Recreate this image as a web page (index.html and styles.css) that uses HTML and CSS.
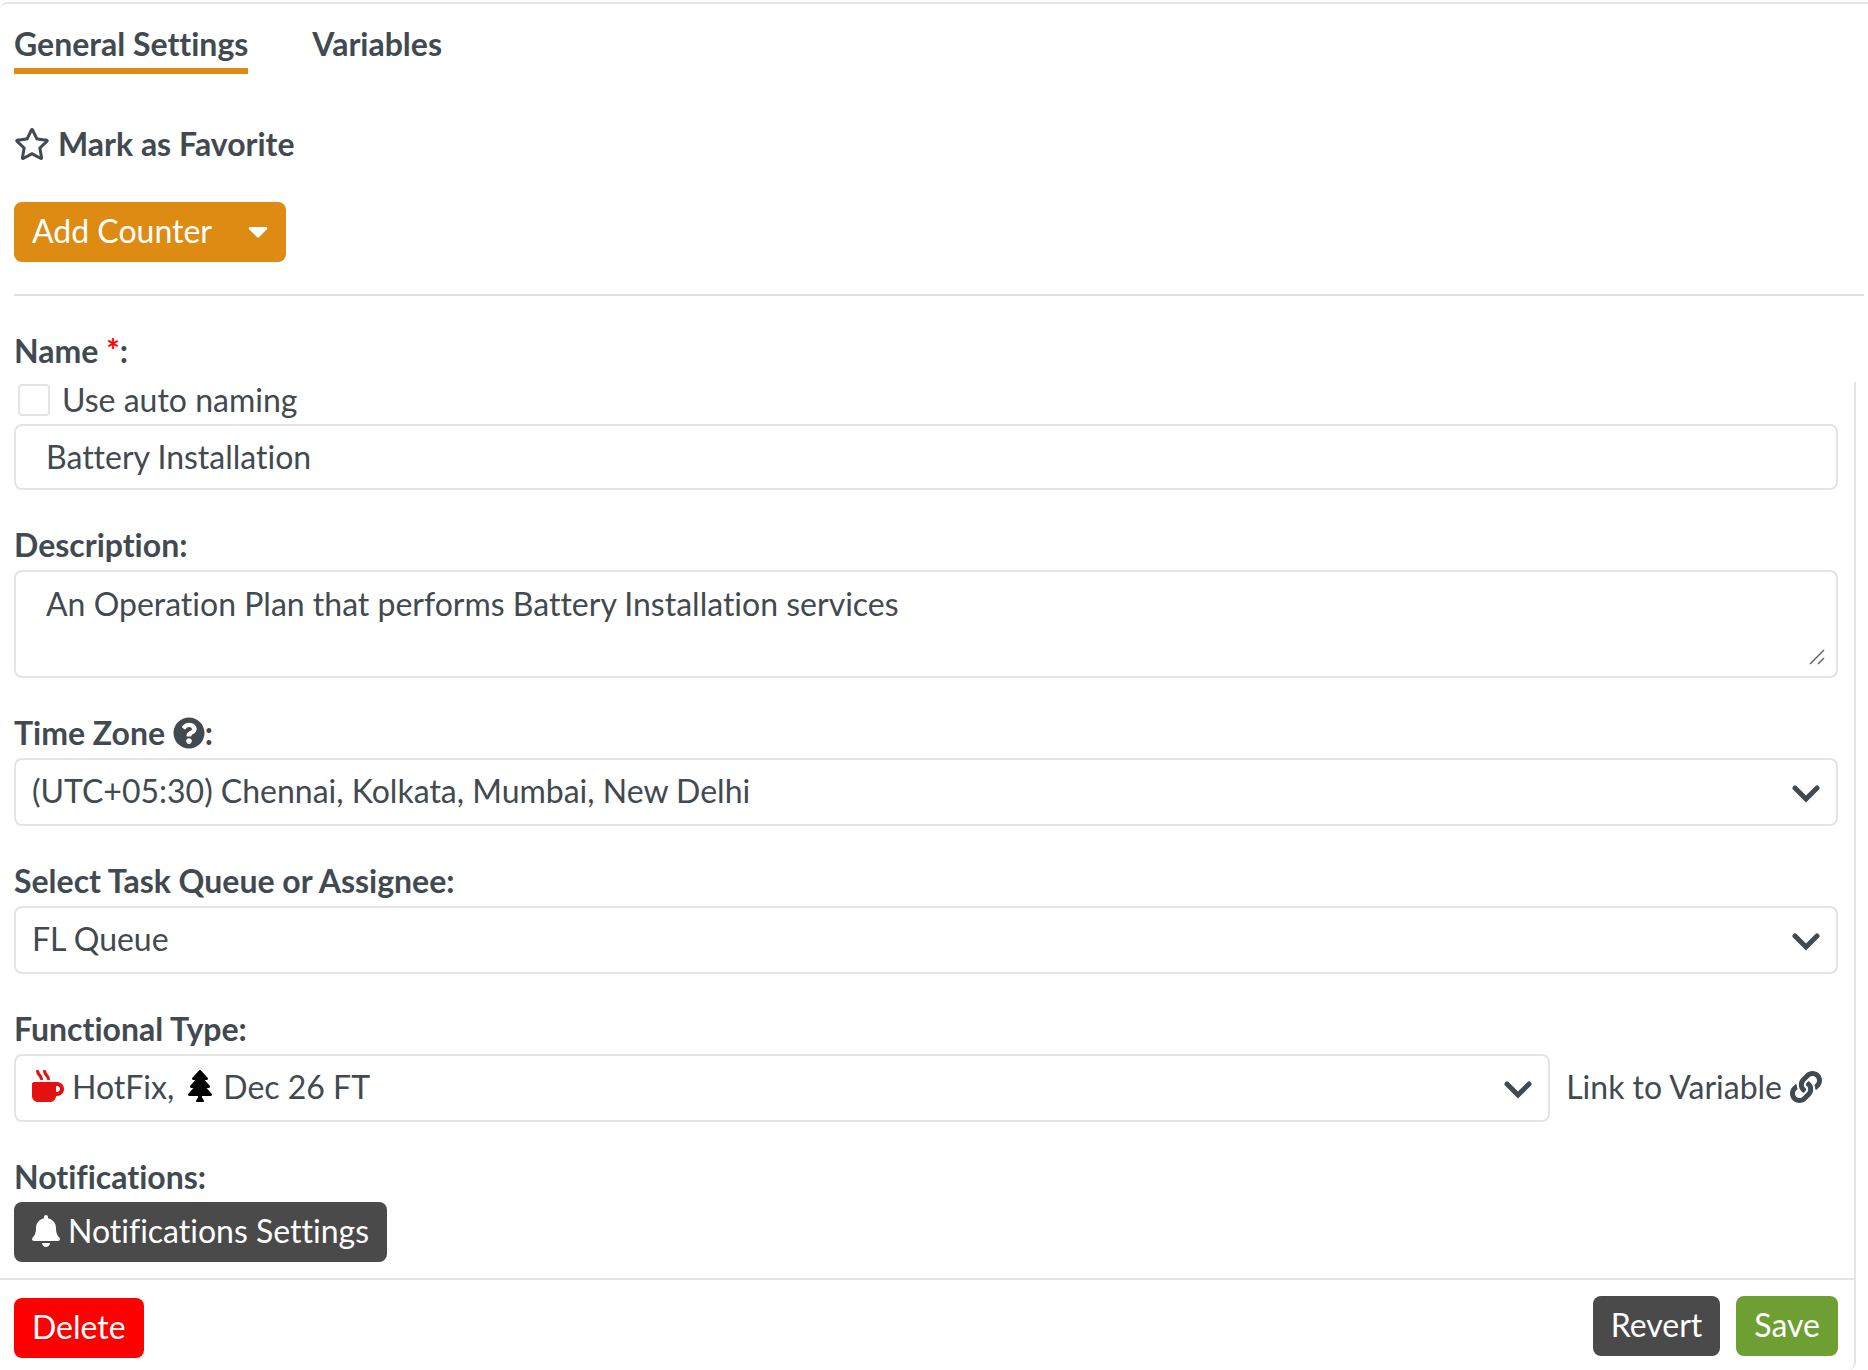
FILE: index.html
```html
<!DOCTYPE html>
<html lang="en">
<head>
<meta charset="utf-8">
<meta name="viewport" content="width=device-width, initial-scale=1">
<title>General Settings</title>
<link rel="stylesheet" href="styles.css">
</head>
<body>
<main class="panel">
  <header class="panel-head">
    <nav class="tabs">
      <a class="tab tab-active" href="#general">General Settings</a>
      <a class="tab" href="#variables">Variables</a>
    </nav>
    <button class="favorite" type="button">
      <svg class="icon-star" viewBox="0 0 576 512" aria-hidden="true"><path d="M528.1 171.5L382 150.2 316.7 17.8c-11.7-23.6-45.6-23.9-57.4 0L194 150.2 47.9 171.5c-26.2 3.8-36.7 36.1-17.7 54.6l105.7 103-25 145.5c-4.5 26.3 23.2 46 46.4 33.7L288 439.6l130.7 68.7c23.2 12.2 50.9-7.4 46.4-33.7l-25-145.5 105.7-103c19-18.5 8.5-50.8-17.7-54.6zM388.6 312.3l23.7 138.4L288 385.4l-124.3 65.3 23.7-138.4-100.6-98 139-20.2 62.2-126 62.2 126 139 20.2-100.6 98z"/></svg>
      Mark as Favorite
    </button>
    <button class="btn btn-orange" type="button">
      Add Counter
      <svg class="icon-caret" viewBox="0 0 320 512" aria-hidden="true"><path d="M31.3 192h257.3c17.8 0 26.7 21.5 14.1 34.1L174.1 354.8c-7.8 7.8-20.5 7.8-28.3 0L17.2 226.1C4.6 213.5 13.5 192 31.3 192z"/></svg>
    </button>
  </header>
  <label class="label label-name" for="name">Name <span class="required">*</span>:</label>
  <form class="form">
    <div class="fields">
      <div class="field">
        <label class="check"><input class="checkbox" type="checkbox">Use auto naming</label>
        <input class="control text" id="name" type="text" value="Battery Installation">
      </div>
      <div class="field">
        <label class="label" for="description">Description:</label>
        <div class="stack">
          <textarea class="control text area" id="description">An Operation Plan that performs Battery Installation services</textarea>
          <svg class="grip" viewBox="0 0 16 16" aria-hidden="true"><path d="M1 15L15 1M9 15l6-6"/></svg>
        </div>
      </div>
      <div class="field">
        <label class="label" for="zone">Time Zone <svg class="icon-help" viewBox="0 0 512 512" aria-hidden="true"><path d="M504 256c0 136.997-111.043 248-248 248S8 392.997 8 256C8 119.083 119.043 8 256 8s248 111.083 248 248zM262.655 90c-54.497 0-89.255 22.957-116.549 63.758-3.536 5.286-2.353 12.415 2.715 16.258l34.699 26.31c5.205 3.947 12.621 3.008 16.665-2.122 17.864-22.658 30.113-35.797 57.303-35.797 20.429 0 45.698 13.148 45.698 32.958 0 14.976-12.363 22.667-32.534 33.976C247.128 238.528 216 254.941 216 296v4c0 6.627 5.373 12 12 12h56c6.627 0 12-5.373 12-12v-1.333c0-28.462 83.186-29.647 83.186-106.667 0-58.002-60.165-102-116.531-102zM256 338c-25.365 0-46 20.635-46 46 0 25.364 20.635 46 46 46s46-20.636 46-46c0-25.364-20.635-46-46-46z"/></svg>:</label>
        <div class="stack">
          <select class="control select" id="zone"><option>(UTC+05:30) Chennai, Kolkata, Mumbai, New Delhi</option></select>
          <svg class="chevron" viewBox="0 0 28 18" aria-hidden="true"><path d="M3 3l11 11L25 3"/></svg>
        </div>
      </div>
      <div class="field">
        <label class="label" for="queue">Select Task Queue or Assignee:</label>
        <div class="stack">
          <select class="control select" id="queue"><option>FL Queue</option></select>
          <svg class="chevron" viewBox="0 0 28 18" aria-hidden="true"><path d="M3 3l11 11L25 3"/></svg>
        </div>
      </div>
      <div class="field">
        <label class="label" for="type">Functional Type:</label>
        <div class="type-row">
          <div class="stack type-select">
            <select class="control select select-icons" id="type"><option>HotFix,&nbsp;&nbsp;&nbsp;&nbsp;&nbsp;&nbsp;Dec 26 FT</option></select>
            <svg class="icon-mug" viewBox="0 0 512 512" aria-hidden="true"><path d="M127.1 146.5c1.3 7.7 8 13.5 16 13.5h16.5c9.8 0 17.6-8.5 16.3-18-3.8-28.2-16.4-54.2-36.6-74.7-14.4-14.7-23.6-33.3-26.4-53.5C111.8 5.9 105 0 96.8 0H80.4C70.6 0 63 8.5 64.1 18c3.9 31.9 18 61.3 40.6 84.4 12 12.2 19.7 27.5 22.4 44.1zm112 0c1.3 7.7 8 13.5 16 13.5h16.5c9.8 0 17.6-8.5 16.3-18-3.8-28.2-16.4-54.2-36.6-74.7-14.4-14.7-23.6-33.3-26.4-53.5C223.8 5.9 217 0 208.8 0h-16.4c-9.8 0-17.5 8.5-16.3 18 3.9 31.9 18 61.3 40.6 84.4 12 12.2 19.7 27.5 22.4 44.1zM400 192H32c-17.7 0-32 14.3-32 32v192c0 53 43 96 96 96h192c53 0 96-43 96-96h16c61.8 0 112-50.2 112-112s-50.2-112-112-112zm0 160h-16v-96h16c26.5 0 48 21.5 48 48s-21.5 48-48 48z"/></svg>
            <svg class="icon-tree" viewBox="0 0 384 512" aria-hidden="true"><path d="M378.31 378.49L298.42 288h30.63c9.01 0 16.98-5 20.78-13.06 3.8-8.04 2.55-17.26-3.28-24.05L268.42 160h28.89c9.1 0 17.3-5.35 20.86-13.61 3.52-8.13 1.86-17.59-4.24-24.08L203.66 4.83c-6.03-6.45-17.28-6.45-23.32 0L70.06 122.31c-6.1 6.49-7.75 15.95-4.24 24.08C69.38 154.65 77.59 160 86.69 160h28.89l-78.14 90.91c-5.81 6.78-7.06 15.99-3.27 24.04C37.97 283 45.93 288 54.95 288h30.63L5.69 378.49c-6 6.79-7.36 16.09-3.56 24.26 3.75 8.05 12 13.25 21.01 13.25H160v24.45l-30.29 48.4c-5.32 10.64 2.42 23.16 14.31 23.16h95.96c11.89 0 19.63-12.52 14.31-23.16L224 440.45V416h136.86c9.01 0 17.26-5.2 21.01-13.25 3.8-8.17 2.44-17.47-3.56-24.26z"/></svg>
            <svg class="chevron" viewBox="0 0 28 18" aria-hidden="true"><path d="M3 3l11 11L25 3"/></svg>
          </div>
          <a class="link" href="#link">Link to Variable
            <svg class="icon-link" viewBox="0 0 512 512" aria-hidden="true"><path d="M326.612 185.391c59.747 59.809 58.927 155.698.36 214.59-.11.12-.24.25-.36.37l-67.2 67.2c-59.27 59.27-155.699 59.262-214.96 0-59.27-59.26-59.27-155.7 0-214.96l37.106-37.106c9.84-9.84 26.786-3.3 27.294 10.606.648 17.722 3.826 35.527 9.69 52.721 1.986 5.822.567 12.262-3.783 16.612l-13.087 13.087c-28.026 28.026-28.905 73.66-1.155 101.96 28.024 28.579 74.086 28.749 102.325.51l67.2-67.19c28.191-28.191 28.073-73.757 0-101.83-3.701-3.694-7.429-6.564-10.341-8.569a16.037 16.037 0 0 1-6.947-12.606c-.396-10.567 3.348-21.456 11.698-29.806l21.054-21.055c5.521-5.521 14.182-6.199 20.584-1.731a152.482 152.482 0 0 1 20.522 17.197zM467.547 44.449c-59.261-59.262-155.69-59.27-214.96 0l-67.2 67.2c-.12.12-.25.25-.36.37-58.566 58.892-59.387 154.781.36 214.59a152.454 152.454 0 0 0 20.521 17.196c6.402 4.468 15.064 3.789 20.584-1.731l21.054-21.055c8.35-8.35 12.094-19.239 11.698-29.806a16.037 16.037 0 0 0-6.947-12.606c-2.912-2.005-6.64-4.875-10.341-8.569-28.073-28.073-28.191-73.639 0-101.83l67.2-67.19c28.239-28.239 74.3-28.069 102.325.51 27.75 28.3 26.872 73.934-1.155 101.96l-13.087 13.087c-4.35 4.35-5.769 10.79-3.783 16.612 5.864 17.194 9.042 34.999 9.69 52.721.509 13.906 17.454 20.446 27.294 10.606l37.106-37.106c59.271-59.259 59.271-155.699.001-214.959z"/></svg>
          </a>
        </div>
      </div>
      <div class="field">
        <span class="label">Notifications:</span>
        <button class="btn btn-dark btn-bell" type="button">
          <svg class="icon-bell" viewBox="0 0 448 512" aria-hidden="true"><path d="M224 512c35.32 0 63.97-28.65 63.97-64H160.03c0 35.35 28.65 64 63.97 64zm215.39-149.71c-19.32-20.76-55.47-51.99-55.47-154.29 0-77.7-54.48-139.9-127.94-155.16V32c0-17.67-14.32-32-31.98-32s-31.98 14.33-31.98 32v20.84C118.56 68.1 64.08 130.3 64.08 208c0 102.3-36.15 133.53-55.47 154.29-6 6.45-8.66 14.16-8.61 21.71.11 16.4 12.98 32 32.1 32h383.8c19.12 0 32-15.6 32.1-32 .05-7.55-2.61-15.27-8.61-21.71z"/></svg>
          Notifications Settings
        </button>
      </div>
    </div>
    <footer class="actions">
      <button class="btn btn-red" type="button">Delete</button>
      <div class="actions-end">
        <button class="btn btn-dark" type="button">Revert</button>
        <button class="btn btn-green" type="submit">Save</button>
      </div>
    </footer>
  </form>
</main>
</body>
</html>
```
FILE: styles.css
```css
* {
  box-sizing: border-box;
}

body {
  margin: 0;
  background: #fff;
  color: #414a51;
  font: 32px/40px Lato, "Open Sans", sans-serif;
  font-variant-ligatures: none;
}

button,
input,
select,
textarea {
  margin: 0;
  color: inherit;
  font: inherit;
  font-variant-ligatures: none;
}

svg {
  display: block;
  flex: none;
  fill: currentColor;
}

a {
  color: inherit;
  text-decoration: none;
}

.panel {
  display: flex;
  flex-direction: column;
  min-height: 100vh;
  padding-top: 2px;
}

.panel-head {
  display: flex;
  flex-direction: column;
  align-items: flex-start;
  padding: 20px 4px 0 14px;
  border-top: 2px solid #e4e4e4;
  border-top-left-radius: 8px;
}

.panel-head::after {
  content: "";
  align-self: stretch;
  height: 2px;
  margin-top: 32px;
  background: #e0e0e0;
}

.tabs {
  display: flex;
  gap: 64px;
  font-weight: 700;
}

.tab {
  padding-bottom: 4px;
  border-bottom: 6px solid transparent;
}

.tab-active {
  border-bottom-color: #dd8b12;
}

.favorite {
  display: flex;
  align-items: center;
  gap: 8px;
  margin: 50px 0 38px;
  padding: 0;
  border: 0;
  background: none;
  font-weight: 700;
}

.icon-star {
  width: 36px;
  height: 32px;
}

.btn {
  display: flex;
  align-items: center;
  height: 60px;
  padding: 0 18px 2px;
  border: 0;
  border-radius: 8px;
  color: #fff;
}

.btn-orange {
  gap: 36px;
  background: #dd8b12;
}

.btn-dark {
  background: #4a4a4a;
}

.btn-red {
  background: #f00;
}

.btn-green {
  background: #6d9f33;
}

.btn-bell {
  gap: 8px;
}

.icon-caret {
  width: 20px;
  height: 32px;
}

.icon-bell {
  width: 28px;
  height: 32px;
}

.label {
  display: flex;
  align-items: center;
  align-self: flex-start;
  height: 44px;
  padding-bottom: 6px;
  font-weight: 700;
  white-space: pre;
}

.label-name {
  margin: 36px 0 6px 14px;
}

.required {
  color: #f00;
}

.form {
  display: flex;
  flex: 1;
  flex-direction: column;
  margin-right: 12px;
  border-right: 2px solid #e4e4e4;
  border-bottom-right-radius: 8px;
}

.fields {
  display: flex;
  flex-direction: column;
  gap: 36px;
  padding: 0 16px 16px 14px;
}

.field {
  display: flex;
  flex-direction: column;
}

.field .btn {
  align-self: flex-start;
}

.check {
  display: flex;
  align-items: center;
  align-self: flex-start;
  gap: 12px;
  height: 42px;
  padding: 0 0 6px 4px;
}

.checkbox {
  width: 32px;
  height: 32px;
  border: 2px solid #e4e4e4;
  border-radius: 4px;
  background: #fff;
  appearance: none;
}

.checkbox:checked {
  background: #dd8b12;
}

.control {
  display: block;
  width: 100%;
  border: 2px solid #e4e4e4;
  border-radius: 8px;
  background: #fff;
}

.text {
  height: 66px;
  padding: 0 30px 2px;
}

.area {
  height: 108px;
  padding-top: 12px;
  resize: none;
}

.select {
  height: 68px;
  padding: 0 60px 2px 16px;
  appearance: none;
}

.select-icons {
  padding-left: 56px;
}

.stack {
  position: relative;
}

.grip {
  position: absolute;
  right: 13px;
  bottom: 13px;
  width: 16px;
  height: 16px;
  fill: none;
  stroke: #666;
  stroke-width: 1.5;
}

.chevron {
  position: absolute;
  top: 27px;
  right: 18px;
  width: 28px;
  height: 18px;
  fill: none;
  stroke: currentColor;
  stroke-width: 5;
  stroke-linecap: round;
  pointer-events: none;
}

.icon-mug,
.icon-tree {
  position: absolute;
  top: 16px;
  pointer-events: none;
}

.icon-mug {
  left: 18px;
  width: 32px;
  height: 32px;
  color: #e51111;
}

.icon-tree {
  left: 174px;
  width: 24px;
  height: 32px;
  color: #000;
}

.type-row {
  display: flex;
  align-items: center;
  gap: 16px;
}

.type-select {
  flex: 1;
}

.link {
  display: flex;
  align-items: center;
  gap: 8px;
  padding: 0 16px 2px 0;
}

.icon-link {
  width: 32px;
  height: 32px;
}

.icon-help {
  width: 32px;
  height: 32px;
}

.actions {
  display: flex;
  flex: 1;
  justify-content: space-between;
  padding: 16px 16px 12px 14px;
  border-top: 2px solid #e4e4e4;
}

.actions .btn-red {
  align-self: flex-end;
}

.actions-end {
  display: flex;
  align-items: flex-start;
  gap: 16px;
}
```
